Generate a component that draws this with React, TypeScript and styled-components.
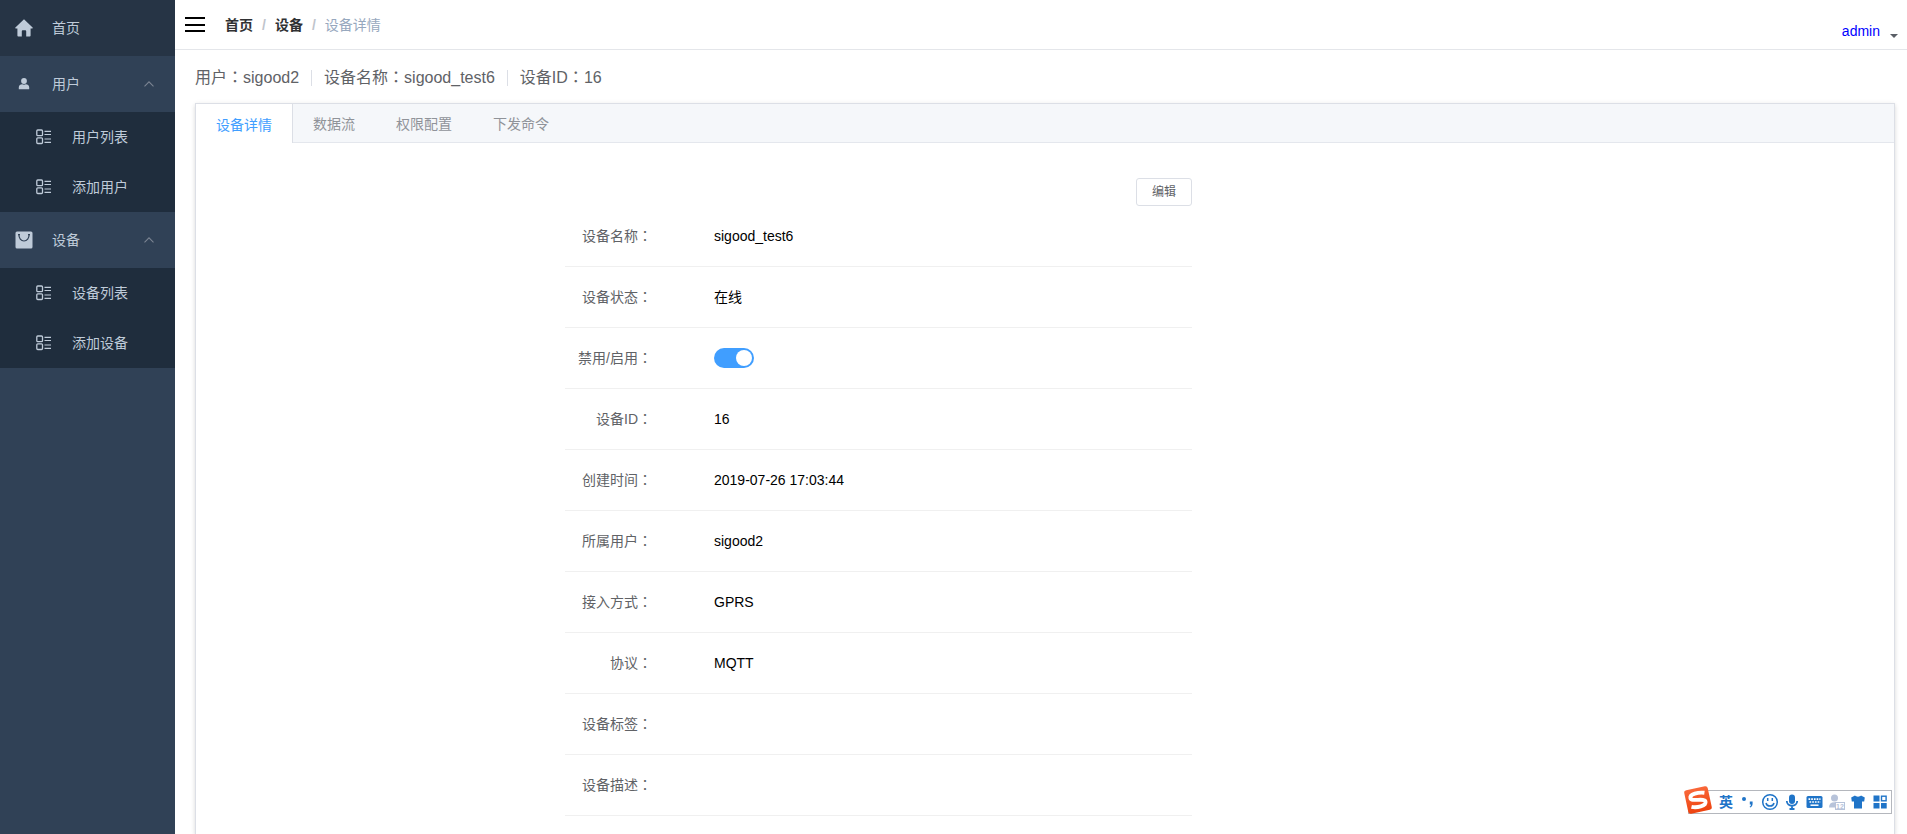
import React, { useState } from "react";
import styled, { createGlobalStyle, css } from "styled-components";

const GlobalStyle = createGlobalStyle`
  * { box-sizing: border-box; }
  body {
    margin: 0;
    background: #fff;
    color: #000;
    font-family: "Liberation Sans", "Noto Sans CJK SC", sans-serif;
    font-size: 14px;
    line-height: 20px;
  }
  ul, ol, dl, dd { margin: 0; padding: 0; list-style: none; }
  button { font-family: inherit; cursor: pointer; }
`;

const Layout = styled.div`
  display: flex;
  min-height: 100vh;
`;

/* Sidebar */

const Sidebar = styled.nav`
  flex: 0 0 175px;
  background: #304156;
`;

const menuRow = css`
  display: flex;
  align-items: center;
  width: 100%;
  border: 0;
  color: #bfcbd9;
  font-size: 14px;
  line-height: 20px;
  text-align: left;
  text-decoration: none;
`;

const topRow = css`
  ${menuRow}
  height: 56px;
  padding: 0 20px 0 14px;
  gap: 18px;
`;

const MenuLink = styled.a<{ $active?: boolean }>`
  ${topRow}
  background: ${(p) => (p.$active ? "#263445" : "transparent")};
`;

const MenuToggle = styled.button`
  ${topRow}
  background: transparent;
`;

const MenuText = styled.span`
  flex: 1;
`;

const IconSlot = styled.span`
  display: flex;
  justify-content: center;
  width: 20px;
`;

const SubLink = styled.a`
  ${menuRow}
  height: 50px;
  padding-left: 36px;
  gap: 20px;
  background: #1f2d3d;
`;

/* Top bar */

const Main = styled.main`
  display: flex;
  flex: 1;
  flex-direction: column;
  min-width: 0;
`;

const Navbar = styled.header`
  display: flex;
  align-items: center;
  height: 50px;
  padding: 0 9px 0 10px;
  border-bottom: 1px solid #e4e6ea;
`;

const Hamburger = styled.button`
  display: flex;
  padding: 0;
  border: 0;
  background: none;
`;

const Breadcrumb = styled.ol`
  display: flex;
  flex: 1;
  padding-left: 20px;
`;

const Crumb = styled.li`
  &:not(:last-child)::after {
    content: "/";
    margin: 0 9px;
    color: #c0c4cc;
    font-weight: 700;
  }
`;

const CrumbLink = styled.a`
  color: #303133;
  font-weight: 700;
  text-decoration: none;
`;

const CrumbCurrent = styled.span`
  color: #97a8be;
`;

const UserLink = styled.a`
  display: flex;
  align-items: center;
  gap: 10px;
  padding-top: 12px;
  color: #00f;
  text-decoration: none;
`;

const Caret = styled.span`
  margin-top: 14px;
  border: 4px solid transparent;
  border-top-color: #5a5e66;
`;

/* Page content */

const Content = styled.section`
  display: flex;
  flex: 1;
  flex-direction: column;
  padding: 16px 12px 0 20px;
`;

const Summary = styled.div`
  display: flex;
  align-items: center;
  gap: 12px;
  margin-bottom: 13px;
  color: #606266;
  font-size: 16px;
  line-height: 24px;
`;

const Divider = styled.span`
  width: 1px;
  height: 16px;
  background: #dcdfe6;
`;

const ColonMark = styled.span`
  font-family: "Noto Sans CJK TC", sans-serif;
  line-height: 1;
`;

const Card = styled.div`
  flex: 1;
  border: 1px solid #dcdfe6;
  border-bottom: 0;
  background: #fff;
  box-shadow: 0 2px 4px rgba(0, 0, 0, 0.12), 0 0 6px rgba(0, 0, 0, 0.04);
`;

const TabList = styled.div`
  display: flex;
  height: 39px;
  border-bottom: 1px solid #e4e7ed;
  background: #f5f7fa;
`;

const Tab = styled.button<{ $active: boolean }>`
  margin: 0 0 ${(p) => (p.$active ? "-1px" : "0")} -1px;
  padding: 0 20px;
  border: solid ${(p) => (p.$active ? "#dcdfe6" : "transparent")};
  border-width: 0 1px;
  background: ${(p) => (p.$active ? "#fff" : "transparent")};
  color: ${(p) => (p.$active ? "#409eff" : "#909399")};
  font-size: 14px;
`;

const Panel = styled.div`
  display: grid;
  grid-template-columns: 369fr 627fr 702fr;
  padding-top: 35px;
`;

const Details = styled.div`
  grid-column: 2;
`;

const Toolbar = styled.div`
  display: flex;
  justify-content: flex-end;
`;

const EditButton = styled.button`
  width: 56px;
  height: 28px;
  padding: 0;
  border: 1px solid #dcdfe6;
  border-radius: 3px;
  background: #fff;
  color: #606266;
  font-size: 12px;
  line-height: 16px;
`;

const Field = styled.div`
  display: flex;
  align-items: center;
  height: 61px;
  border-bottom: 1px solid #f0f0f0;
`;

const FieldName = styled.dt`
  width: 99px;
  padding-right: 12px;
  color: #606266;
  text-align: right;
`;

const FieldValue = styled.dd`
  display: flex;
  flex: 1;
  padding-left: 50px;
`;

const Switch = styled.input`
  display: flex;
  align-items: center;
  width: 40px;
  height: 20px;
  margin: 0;
  padding: 2px;
  border-radius: 10px;
  appearance: none;
  background: #dcdfe6;
  cursor: pointer;

  &::before {
    content: "";
    width: 16px;
    height: 16px;
    border-radius: 50%;
    background: #fff;
  }
  &:checked {
    justify-content: flex-end;
    background: #409eff;
  }
`;

/* Input method bar floating over the page */

const ImeBar = styled.aside`
  position: fixed;
  right: 15px;
  bottom: 20px;
  display: flex;
  align-items: center;
  height: 24px;
  border: 1px solid #b4b7bd;
  background: #fff;
`;

const ImeLogo = styled.span`
  display: flex;
  margin: -4px 2px 0 -6px;
`;

const ImeButton = styled.button`
  display: flex;
  align-items: center;
  justify-content: center;
  width: 22px;
  height: 22px;
  padding: 0;
  border: 0;
  background: none;
  color: #1f74c8;
  font-size: 14px;
  font-weight: 700;
  line-height: 20px;
`;

const HomeIcon = () => (
  <svg width="18" height="18" viewBox="0 0 18 18" fill="currentColor">
    <path d="M9 0.3 17.6 8.6c.4.5.2.9-.4.9H15.6V16.6c0 .6-.3.9-.9.9H11.2V12.2c0-.7-.3-1-.9-1H7.7c-.6 0-.9.3-.9 1v5.3H3.3c-.6 0-.9-.3-.9-.9V9.5H.8c-.6 0-.8-.4-.4-.9Z" />
  </svg>
);

const UserIcon = () => (
  <svg width="12" height="12" viewBox="0 0 12 12" fill="currentColor">
    <circle cx="6" cy="3" r="2.900" />
    <path d="M.8 11.300V9.300c0-2 1.700-3.100 3.300-3.100.6.300 1.200.5 1.900.5s1.300-.2 1.900-.5c1.600 0 3.300 1.100 3.300 3.100v2Z" />
  </svg>
);

const BagIcon = () => (
  <svg width="18" height="18" viewBox="0 0 18 18">
    <rect x="0.500" y="0.500" width="17" height="17" rx="1.500" fill="currentColor" />
    <path d="M3 3.600h2M13 3.600h2M3.900 3.800c0 3.300 2 6.200 5.100 6.200s5.100-2.900 5.100-6.200" fill="none" stroke="#304156" strokeWidth="1.200" />
  </svg>
);

const ListIcon = () => (
  <svg width="16" height="16" viewBox="0 0 16 16" fill="none" stroke="currentColor" strokeWidth="1.300">
    <rect x="0.800" y="1" width="5.700" height="5.700" rx="1" />
    <rect x="0.800" y="8.800" width="5.700" height="5.700" rx="1" />
    <path d="M8.500 2.300h6.500M8.500 5.500h6.500M8.500 10h6.500M8.500 13.300h6.500" strokeWidth="1.200" />
  </svg>
);

const ChevronUp = () => (
  <svg width="12" height="12" viewBox="0 0 12 12" fill="none" stroke="#7b8492" strokeWidth="1.100">
    <path d="M1.500 8.300 6 3.800l4.500 4.500" />
  </svg>
);

const MenuIcon = () => (
  <svg width="20" height="18" viewBox="0 0 20 18" stroke="#000" strokeWidth="2">
    <path d="M0 2h20M0 9h20M0 15h20" />
  </svg>
);

const LogoIcon = () => (
  <svg width="30" height="30" viewBox="0 0 30 30">
    <defs>
      <linearGradient id="imeLogo" x1="0" y1="0" x2="0" y2="1">
        <stop offset="0" stopColor="#f9683a" />
        <stop offset="1" stopColor="#ee430f" />
      </linearGradient>
    </defs>
    <g transform="rotate(-12 15 15)">
      <rect x="3" y="3" width="24" height="24" rx="2.500" fill="url(#imeLogo)" />
      <path d="M22.800 9.300C17 7.300 7.800 7.400 8 11.600c.2 4.200 14 2.300 14 6.600 0 4.500-10 4.300-14.800 2.100" fill="none" stroke="#fff" strokeWidth="3.900" />
    </g>
  </svg>
);

const PunctuationIcon = () => (
  <svg width="16" height="16" viewBox="0 0 16 16" fill="currentColor">
    <circle cx="4" cy="5" r="2" />
    <path d="M9.800 7.500h2.800v2.300c0 1.900-.9 3.100-2.500 3.800l-.5-.9c1-.5 1.400-1.200 1.400-2.100H9.800Z" />
  </svg>
);

const SmileIcon = () => (
  <svg width="18" height="18" viewBox="0 0 18 18" fill="none" stroke="currentColor" strokeWidth="1.500">
    <circle cx="9" cy="9" r="7.300" />
    <path d="M5 10c.8 4 7.200 4 8 0M6.700 5v3M11.300 5v3" />
  </svg>
);

const MicIcon = () => (
  <svg width="16" height="18" viewBox="0 0 16 18">
    <rect x="5" y="1.500" width="6" height="9.500" rx="3" fill="currentColor" />
    <path d="M2.800 8c0 6.300 10.400 6.300 10.400 0M8 13v3.500M5.500 16h5" fill="none" stroke="currentColor" strokeWidth="1.800" />
  </svg>
);

const KeyboardIcon = () => (
  <svg width="17" height="14" viewBox="0 0 17 14">
    <rect x="0.500" y="1" width="16" height="12" rx="1.500" fill="currentColor" />
    <path d="M2.500 4.200h12M3.500 7h11" stroke="#fff" strokeWidth="1.700" strokeDasharray="1.700 1" />
    <path d="M4.500 10.200h8" stroke="#fff" strokeWidth="1.500" />
  </svg>
);

const PersonIcon = () => (
  <svg width="18" height="18" viewBox="0 0 18 18" fill="#b7c3da">
    <circle cx="7.500" cy="5" r="3.500" />
    <path d="M2 14.500c0-3.500 1.800-5.300 5.500-5.300h9v5.300Z" />
    <rect x="8.500" y="9.500" width="9" height="7" fill="#fff" stroke="#b7c3da" />
    <text x="9" y="15.800" fontSize="7" fontWeight="700">12</text>
  </svg>
);

const ShirtIcon = () => (
  <svg width="16" height="16" viewBox="0 0 16 16" fill="currentColor">
    <path d="M5 1.500c1 1.500 5 1.500 6 0l3.800 2L14.200 7.500H12V14.500H4V7.500H1.800L1.200 3.500Z" />
  </svg>
);

const ToolsIcon = () => (
  <svg width="14" height="14" viewBox="0 0 14 14" fill="currentColor">
    <rect x="0.500" y="0.500" width="6" height="6" />
    <rect x="8.500" y="1.200" width="4.600" height="4.600" fill="none" stroke="currentColor" strokeWidth="1.400" />
    <rect x="0.500" y="8" width="6" height="5.500" />
    <rect x="8" y="8" width="5.700" height="5.500" />
  </svg>
);

const Colon = () => <ColonMark>：</ColonMark>;

const groups = [
  { name: "用户", icon: <UserIcon />, items: ["用户列表", "添加用户"] },
  { name: "设备", icon: <BagIcon />, items: ["设备列表", "添加设备"] },
];

const summary = [
  ["用户", "sigood2"],
  ["设备名称", "sigood_test6"],
  ["设备ID", "16"],
];

const tabs = ["设备详情", "数据流", "权限配置", "下发命令"];

const imeTools = [
  { name: "中英文切换", icon: "英" },
  { name: "标点", icon: <PunctuationIcon /> },
  { name: "表情", icon: <SmileIcon /> },
  { name: "语音", icon: <MicIcon /> },
  { name: "键盘", icon: <KeyboardIcon /> },
  { name: "账号", icon: <PersonIcon /> },
  { name: "皮肤", icon: <ShirtIcon /> },
  { name: "工具箱", icon: <ToolsIcon /> },
];

export default function App() {
  const [enabled, setEnabled] = useState(true);
  const [tab, setTab] = useState(tabs[0]);

  const fields: [string, React.ReactNode][] = [
    ["设备名称", "sigood_test6"],
    ["设备状态", "在线"],
    [
      "禁用/启用",
      <Switch
        key="switch"
        id="device-enabled"
        type="checkbox"
        role="switch"
        checked={enabled}
        onChange={(e) => setEnabled(e.target.checked)}
      />,
    ],
    ["设备ID", "16"],
    ["创建时间", "2019-07-26 17:03:44"],
    ["所属用户", "sigood2"],
    ["接入方式", "GPRS"],
    ["协议", "MQTT"],
    ["设备标签", ""],
    ["设备描述", ""],
  ];

  return (
    <Layout>
      <GlobalStyle />
      <Sidebar>
        <MenuLink href="#home" $active>
          <IconSlot><HomeIcon /></IconSlot>
          <MenuText>首页</MenuText>
        </MenuLink>
        {groups.map((group) => (
          <div key={group.name}>
            <MenuToggle type="button" aria-expanded="true">
              <IconSlot>{group.icon}</IconSlot>
              <MenuText>{group.name}</MenuText>
              <ChevronUp />
            </MenuToggle>
            <ul>
              {group.items.map((item) => (
                <li key={item}>
                  <SubLink href="#menu">
                    <ListIcon />
                    <MenuText>{item}</MenuText>
                  </SubLink>
                </li>
              ))}
            </ul>
          </div>
        ))}
      </Sidebar>

      <Main>
        <Navbar>
          <Hamburger type="button" aria-label="折叠菜单"><MenuIcon /></Hamburger>
          <Breadcrumb>
            <Crumb><CrumbLink href="#home">首页</CrumbLink></Crumb>
            <Crumb><CrumbLink href="#devices">设备</CrumbLink></Crumb>
            <Crumb><CrumbCurrent>设备详情</CrumbCurrent></Crumb>
          </Breadcrumb>
          <UserLink href="#account">
            admin
            <Caret />
          </UserLink>
        </Navbar>

        <Content>
          <Summary>
            {summary.map(([name, value], i) => (
              <React.Fragment key={name}>
                {i > 0 && <Divider />}
                <span>{name}<Colon />{value}</span>
              </React.Fragment>
            ))}
          </Summary>

          <Card>
            <TabList role="tablist">
              {tabs.map((name) => (
                <Tab
                  key={name}
                  type="button"
                  role="tab"
                  aria-selected={tab === name}
                  $active={tab === name}
                  onClick={() => setTab(name)}
                >
                  {name}
                </Tab>
              ))}
            </TabList>
            <Panel role="tabpanel">
              <Details>
                <Toolbar>
                  <EditButton type="button">编辑</EditButton>
                </Toolbar>
                <dl>
                  {fields.map(([name, value]) => (
                    <Field key={name}>
                      <FieldName>
                        {name === "禁用/启用" ? (
                          <label htmlFor="device-enabled">{name}<Colon /></label>
                        ) : (
                          <>{name}<Colon /></>
                        )}
                      </FieldName>
                      <FieldValue>{value}</FieldValue>
                    </Field>
                  ))}
                </dl>
              </Details>
            </Panel>
          </Card>
        </Content>
      </Main>

      <ImeBar>
        <ImeLogo><LogoIcon /></ImeLogo>
        {imeTools.map((tool) => (
          <ImeButton key={tool.name} type="button" aria-label={tool.name}>
            {tool.icon}
          </ImeButton>
        ))}
      </ImeBar>
    </Layout>
  );
}
